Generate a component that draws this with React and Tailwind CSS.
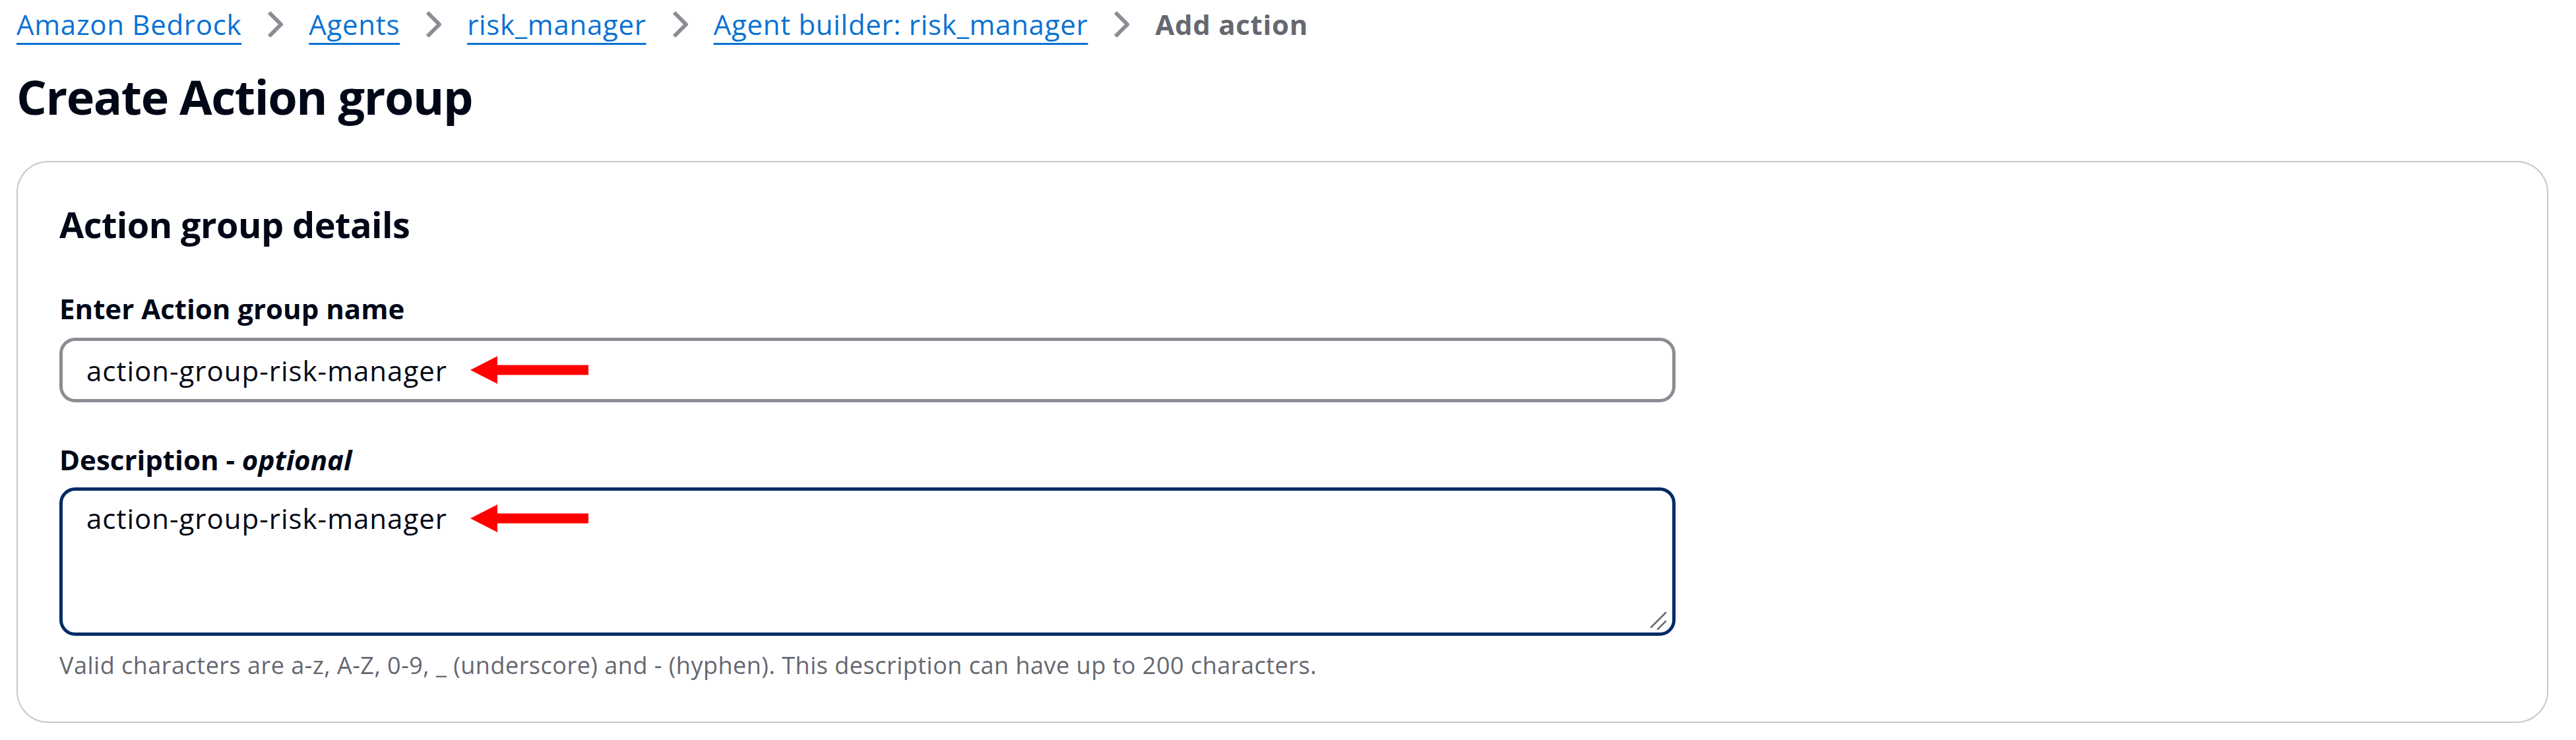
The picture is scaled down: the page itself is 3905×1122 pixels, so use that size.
const crumbs = ['Amazon Bedrock', 'Agents', 'risk_manager', 'Agent builder: risk_manager']

function Chevron() {
  return (
    <svg width="48" height="48" viewBox="0 0 16 16" fill="none" className="shrink-0">
      <path d="M5 2l6 6-6 6" stroke="#8c8c94" strokeWidth="2" strokeLinejoin="round" />
    </svg>
  )
}

function RedArrow() {
  return (
    <svg width="179" height="42" viewBox="0 0 179 42" className="shrink-0">
      <path d="M0 21L41 0V13.5H179V28.5H41V42Z" fill="#ff0000" />
    </svg>
  )
}

export default function App() {
  return (
    <div
      className="min-h-screen bg-white pl-[25px] pr-[42px] pt-[7px] text-[#000716]"
      style={{ fontFamily: '"Open Sans", "Liberation Sans", sans-serif' }}
    >
      {/* breadcrumbs */}
      <nav className="flex items-center gap-[27px] text-[42px] leading-[60px] tracking-[0.7px]">
        {crumbs.map((c) => (
          <div key={c} className="flex items-center gap-[27px]">
            <a className="text-[#0972d3] underline decoration-[3px] underline-offset-[12px] whitespace-nowrap">{c}</a>
            <Chevron />
          </div>
        ))}
        <span className="font-bold text-[#656871] whitespace-nowrap">Add action</span>
      </nav>

      <h1 className="mt-[34px] text-[72px] leading-[90px] font-bold tracking-[-0.02em]">Create Action group</h1>

      {/* container */}
      <div className="mt-[53px] rounded-[48px] border-2 border-[#c6c6cd] px-[63px] pt-[61px] pb-[61px]">
        <h2 className="text-[54px] leading-[66px] font-bold tracking-[-0.01em]">Action group details</h2>

        <div className="mt-[65px] text-[42px] leading-[60px] font-bold">Enter Action group name</div>
        <div className="mt-[14px] flex h-[98px] w-[2450px] items-center gap-[35px] rounded-[24px] border-[5px] border-[#8c8c94] px-[36px] text-[42px] tracking-[1px]">
          <span className="whitespace-nowrap">action-group-risk-manager</span>
          <RedArrow />
        </div>

        <div className="mt-[57px] text-[42px] leading-[60px] font-bold">
          Description - <i>optional</i>
        </div>
        <div className="relative mt-[12px] h-[225px] w-[2450px] rounded-[24px] border-[5px] border-[#002b66] px-[36px] pt-[12px] text-[42px] leading-[60px] tracking-[1px]">
          <div className="flex items-center gap-[35px]">
            <span className="whitespace-nowrap">action-group-risk-manager</span>
            <RedArrow />
          </div>
          <svg width="32" height="32" viewBox="0 0 32 32" className="absolute right-[3px] bottom-[3px]">
            <path d="M3 27L25 5M13 30L25 18" stroke="#6b6b6b" strokeWidth="2.5" strokeLinecap="round" />
          </svg>
        </div>
        <p className="mt-[21px] text-[36px] leading-[48px] tracking-[0.5px] text-[#656871]">
          Valid characters are a-z, A-Z, 0-9, _ (underscore) and - (hyphen). This description can have up to 200 characters.
        </p>
      </div>
    </div>
  )
}
